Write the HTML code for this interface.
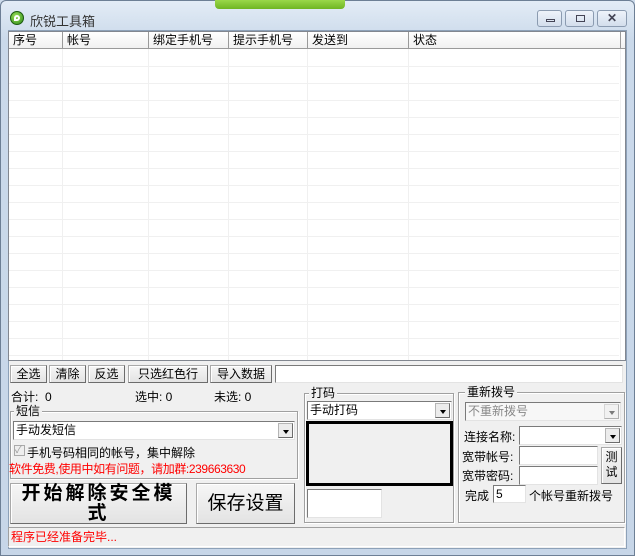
<!DOCTYPE html>
<html><head><meta charset="utf-8"><style>
*{box-sizing:border-box;margin:0;padding:0}
body{width:635px;height:556px;overflow:hidden;background:#cddbeb;font-family:"Liberation Sans","Noto Sans CJK SC","WenQuanYi Zen Hei",sans-serif;font-size:12px;color:#000;position:relative}
.a{position:absolute}
.frame{left:0;top:0;width:635px;height:556px;background:linear-gradient(#e3ecf6,#cad9ea 40px,#c7d6e8);border:1px solid #6d7f95;border-radius:6px 6px 0 0}
.client{left:8px;top:30px;width:619px;height:519px;background:#f0f0f0;border:1px solid #8da1b8}
.btn{position:absolute;background:linear-gradient(#f6f6f6,#e3e3e3);border:1px solid #a9a9a9;border-right-color:#6c6c6c;border-bottom-color:#6c6c6c;box-shadow:inset 1px 1px #fff;text-align:center;line-height:16px;font-size:12px}
.inp{position:absolute;background:#fff;border:1px solid #7a7a7a;border-right-color:#e3e3e3;border-bottom-color:#e3e3e3}
.grp{position:absolute;border:1px solid #a0a0a0;box-shadow:inset 1px 1px #fff, 1px 1px #fff}
.gl{position:absolute;background:#f0f0f0;padding:0 2px;font-size:12px;line-height:13px}
.combo{position:absolute;background:#fff;border:1px solid #7a7a7a;border-right-color:#e3e3e3;border-bottom-color:#e3e3e3;font-size:12px;line-height:16px;padding-left:2px}
.arr{position:absolute;right:1px;top:1px;bottom:1px;width:15px;background:#ececec;border:1px solid #b5b5b5;border-right-color:#6c6c6c;border-bottom-color:#6c6c6c}
.arr:after{content:"";position:absolute;left:4px;top:6px;border:3px solid transparent;border-top:4px solid #000;border-bottom:0}
.hd{position:absolute;top:0;height:17px;line-height:17px;padding-left:4px;border-right:1px solid #9a9a9a;background:linear-gradient(#fff,#f1f1f1);border-bottom:1px solid #9a9a9a}
.vl{position:absolute;top:17px;width:1px;height:312px;background:#f0f0f0}
.hl{position:absolute;left:0;width:610px;height:1px;background:#f0f0f0}
.wb{position:absolute;top:10px;height:17px;border:1px solid #8b9bb0;border-radius:3px;background:linear-gradient(#eef3fa,#d3deec)}
</style></head><body>
<div class="a frame"></div>
<div class="a" style="left:215px;top:0;width:130px;height:9px;background:linear-gradient(#9ad84a,#6fb523);border-radius:0 0 4px 4px"></div>
<div class="a" style="left:10px;top:11px;width:14px;height:14px;border-radius:50%;background:radial-gradient(circle at 40% 35%,#9be05a,#2c8a16);border:1px solid #1c5a10"></div>
<div class="a" style="left:14px;top:15px;width:6px;height:6px;border:2px solid #fff;border-radius:50% 50% 50% 0"></div>
<div class="a" style="left:30px;top:11px;font-size:13px;color:#333">欣锐工具箱</div>
<div class="wb" style="left:537px;width:25px"><div class="a" style="left:8px;top:8px;width:9px;height:3px;border:1px solid #445"></div></div>
<div class="wb" style="left:565px;width:29px"><div class="a" style="left:10px;top:4px;width:9px;height:7px;border:1px solid #445"></div></div>
<div class="wb" style="left:597px;width:30px;text-align:center;line-height:14px;font-size:12px;color:#445;font-weight:bold">✕</div>
<div class="a client"></div>
<div class="a" style="left:8px;top:31px;width:618px;height:330px;background:#fff;border:1px solid #828790;overflow:hidden">
<div class="hd" style="left:0;width:54px">序号</div>
<div class="hd" style="left:54px;width:86px">帐号</div>
<div class="hd" style="left:140px;width:80px">绑定手机号</div>
<div class="hd" style="left:220px;width:79px">提示手机号</div>
<div class="hd" style="left:299px;width:101px">发送到</div>
<div class="hd" style="left:400px;width:212px">状态</div>
<div class="hd" style="left:612px;width:10px;border-right:0"></div>
<div class="vl" style="left:53px"></div><div class="vl" style="left:139px"></div><div class="vl" style="left:219px"></div><div class="vl" style="left:298px"></div><div class="vl" style="left:399px"></div><div class="vl" style="left:611px"></div>
<div class="hl" style="top:34px"></div><div class="hl" style="top:51px"></div><div class="hl" style="top:68px"></div><div class="hl" style="top:85px"></div><div class="hl" style="top:102px"></div><div class="hl" style="top:119px"></div><div class="hl" style="top:136px"></div><div class="hl" style="top:153px"></div><div class="hl" style="top:170px"></div><div class="hl" style="top:187px"></div><div class="hl" style="top:204px"></div><div class="hl" style="top:221px"></div><div class="hl" style="top:238px"></div><div class="hl" style="top:255px"></div><div class="hl" style="top:272px"></div><div class="hl" style="top:289px"></div><div class="hl" style="top:306px"></div><div class="hl" style="top:323px"></div>
</div>
<div class="btn" style="left:10px;top:365px;width:37px;height:18px">全选</div>
<div class="btn" style="left:49px;top:365px;width:37px;height:18px">清除</div>
<div class="btn" style="left:88px;top:365px;width:37px;height:18px">反选</div>
<div class="btn" style="left:128px;top:365px;width:80px;height:18px">只选红色行</div>
<div class="btn" style="left:210px;top:365px;width:62px;height:18px">导入数据</div>
<div class="inp" style="left:275px;top:365px;width:348px;height:18px"></div>
<div class="a" style="left:11px;top:388px">合计:&nbsp;&nbsp;0</div>
<div class="a" style="left:135px;top:388px">选中: 0</div>
<div class="a" style="left:214px;top:388px">未选: 0</div>
<div class="grp" style="left:10px;top:411px;width:288px;height:68px"></div>
<div class="gl" style="left:14px;top:405px">短信</div>
<div class="combo" style="left:13px;top:421px;width:282px;height:19px">手动发短信<div class="arr"></div></div>
<div class="a" style="left:14px;top:445px;width:11px;height:11px;border:1px solid #aaa;background:#eee;color:#999;font-size:10px;line-height:9px">✓</div>
<div class="a" style="left:27px;top:444px">手机号码相同的帐号，集中解除</div>
<div class="a" style="left:9px;top:460px;color:#f00;letter-spacing:-0.4px">软件免费,使用中如有问题，请加群:239663630</div>
<div class="btn" style="left:10px;top:483px;width:177px;height:41px;font-size:19px;line-height:20px;font-weight:bold;letter-spacing:3px;padding:0 8px;word-break:break-all">开始解除安全模式</div>
<div class="btn" style="left:196px;top:483px;width:99px;height:41px;font-size:19px;line-height:39px">保存设置</div>
<div class="grp" style="left:304px;top:393px;width:150px;height:130px"></div>
<div class="gl" style="left:309px;top:387px">打码</div>
<div class="combo" style="left:307px;top:401px;width:145px;height:19px">手动打码<div class="arr"></div></div>
<div class="a" style="left:306px;top:421px;width:147px;height:65px;border:3px solid #000;background:#f0f0f0"></div>
<div class="inp" style="left:307px;top:489px;width:75px;height:29px"></div>
<div class="grp" style="left:458px;top:392px;width:167px;height:131px"></div>
<div class="gl" style="left:465px;top:386px">重新拨号</div>
<div class="combo" style="left:465px;top:402px;width:156px;height:19px;color:#888;background:#f7f7f7">不重新拨号<div class="arr" style="opacity:.5"></div></div>
<div class="a" style="left:464px;top:428px">连接名称:</div>
<div class="combo" style="left:519px;top:426px;width:103px;height:19px"><div class="arr"></div></div>
<div class="a" style="left:462px;top:448px">宽带帐号:</div>
<div class="inp" style="left:519px;top:446px;width:79px;height:19px"></div>
<div class="a" style="left:462px;top:467px">宽带密码:</div>
<div class="inp" style="left:519px;top:466px;width:79px;height:19px"></div>
<div class="btn" style="left:601px;top:447px;width:21px;height:37px;line-height:15px;padding-top:2px">测<br>试</div>
<div class="a" style="left:465px;top:487px">完成</div>
<div class="inp" style="left:493px;top:485px;width:33px;height:18px;line-height:16px;padding-left:2px">5</div>
<div class="a" style="left:529px;top:487px">个帐号重新拨号</div>
<div class="a" style="left:8px;top:527px;width:617px;height:20px;border:1px solid #a0a0a0;border-right-color:#fff;border-bottom-color:#fff;color:#f00;line-height:18px;padding-left:2px">程序已经准备完毕...</div>
</body></html>
